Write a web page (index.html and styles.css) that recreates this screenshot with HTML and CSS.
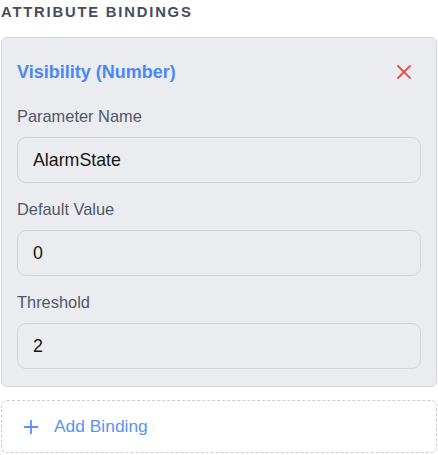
FILE: index.html
```html
<!DOCTYPE html>
<html lang="en">
<head>
<meta charset="utf-8">
<title>Attribute Bindings</title>
<link rel="stylesheet" href="styles.css">
</head>
<body>
<div class="panel">
  <h3 class="section-title">ATTRIBUTE BINDINGS</h3>
  <div class="binding-card">
    <div class="binding-head">
      <span class="binding-title">Visibility (Number)</span>
      <button class="remove-btn" type="button" aria-label="Remove binding">
        <svg width="24" height="24" viewBox="0 0 24 24" fill="none" stroke="currentColor" stroke-width="1.8" stroke-linecap="round" stroke-linejoin="round"><path d="M18 6 6 18"/><path d="m6 6 12 12"/></svg>
      </button>
    </div>
    <div class="field">
      <label class="field-label">Parameter Name</label>
      <input class="field-input" type="text" value="AlarmState">
    </div>
    <div class="field">
      <label class="field-label">Default Value</label>
      <input class="field-input" type="text" value="0">
    </div>
    <div class="field">
      <label class="field-label">Threshold</label>
      <input class="field-input" type="text" value="2">
    </div>
  </div>
  <button class="add-btn" type="button">
    <svg width="22" height="22" viewBox="0 0 24 24" fill="none" stroke="currentColor" stroke-width="2" stroke-linecap="round"><path d="M5 12h14"/><path d="M12 5v14"/></svg>
    <span>Add Binding</span>
  </button>
</div>
</body>
</html>
```
FILE: styles.css
```css
* { box-sizing: border-box; }
html, body { margin: 0; padding: 0; background: #ffffff; }
body { font-family: "Liberation Sans", Arial, sans-serif; }

.panel {
  padding: 2px 1px 0 1px;
  display: flex;
  flex-direction: column;
}

.section-title {
  margin: 0 0 15px 0;
  font-size: 14.8px;
  line-height: 20px;
  font-weight: 700;
  letter-spacing: 1.8px;
  color: #454c5c;
}

.binding-card {
  background: #ebecf0;
  border: 1px solid #d3d5dc;
  border-radius: 6px;
  padding: 15px 15px 17px 15px;
  margin-bottom: 13px;
}

.binding-head {
  display: flex;
  align-items: center;
  justify-content: space-between;
  height: 38px;
  margin-bottom: 16px;
}

.binding-title {
  font-size: 18px;
  font-weight: 700;
  color: #4a89f3;
}

.remove-btn {
  width: 34px;
  height: 34px;
  padding: 5px;
  border: 0;
  background: transparent;
  color: #e5534b;
  display: flex;
  align-items: center;
  justify-content: center;
}

.field + .field { margin-top: 17px; }

.field-label {
  display: block;
  font-size: 16.4px;
  line-height: 19px;
  color: #50576a;
  margin-bottom: 11px;
}

.field-input {
  display: block;
  width: 100%;
  height: 46px;
  padding: 0 15px;
  border: 1px solid #d1d4db;
  border-radius: 9px;
  background: #ebecf0;
  font-family: "Liberation Sans", Arial, sans-serif;
  font-size: 17.8px;
  color: #161616;
  outline: none;
}

.add-btn {
  display: flex;
  align-items: center;
  gap: 12px;
  height: 53px;
  padding: 0 0 0 18px;
  border: 1px dashed #c9ccd3;
  border-radius: 6px;
  background: #ffffff;
  color: #5a93f5;
  font-family: "Liberation Sans", Arial, sans-serif;
  font-size: 17.4px;
  text-align: left;
}
.add-btn svg { flex: none; }
```
